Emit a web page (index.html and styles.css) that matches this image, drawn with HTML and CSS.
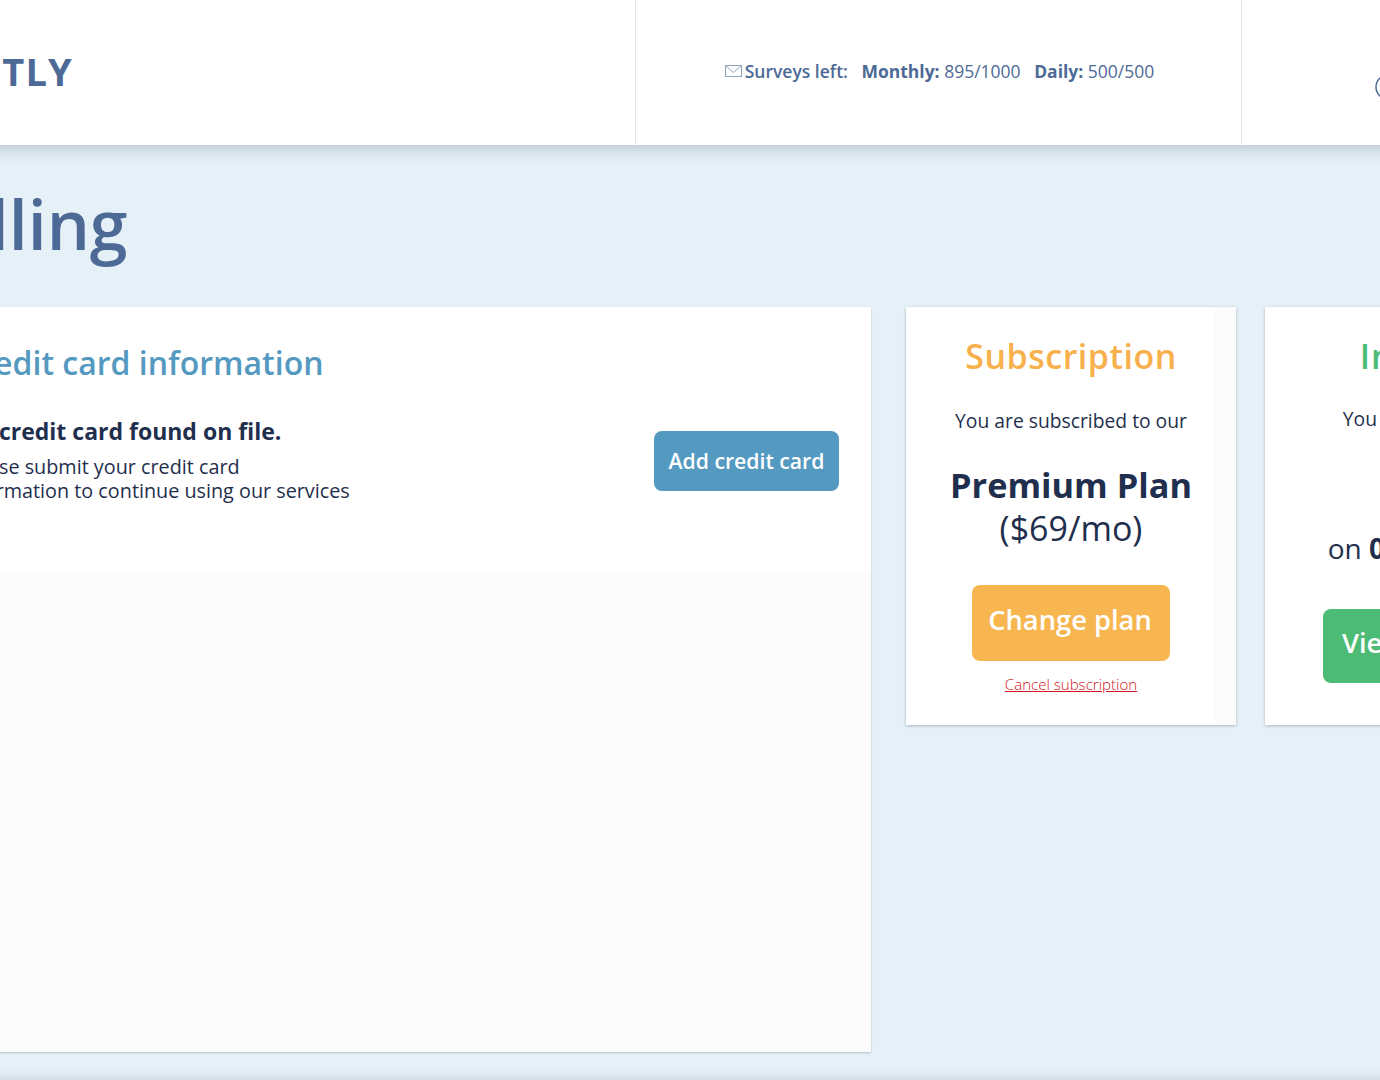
FILE: index.html
```html
<!DOCTYPE html>
<html lang="en">
<head>
  <meta charset="UTF-8" />
  <title>Billing</title>
  <link rel="stylesheet" href="styles.css">
</head>
<body>
<div class="page">
  <header class="top-bar">
    <div class="logo-block"><span class="logo">QUESTLY</span></div>
    <div class="surveys-block">
      <svg class="mail-icon" width="17" height="12" viewBox="0 0 17 12" fill="none" stroke="#8fa3bd" stroke-width="1">
        <rect x="0.5" y="0.5" width="16" height="11"/>
        <path d="M0.5 0.5 L8.5 7.5 L16.5 0.5"/>
      </svg>
      <span class="surveys-label">Surveys left:</span>
      <span class="surveys-count"><b>Monthly:</b> 895/1000</span>
      <span class="surveys-count"><b>Daily:</b> 500/500</span>
    </div>
    <div class="user-block">
      <svg width="28" height="28" viewBox="0 0 28 28" fill="none" stroke="#4d6a97" stroke-width="1.5">
        <circle cx="14" cy="14" r="12"/>
      </svg>
    </div>
  </header>

  <h1 class="page-title">Billing</h1>

  <main class="cards">
    <section class="card-main">
      <div class="card-info">
        <h2 class="info-title">Credit card information</h2>
        <div class="info-row">
          <div>
            <h3 class="info-heading">No credit card found on file.</h3>
            <p class="info-text">Please submit your credit card<br>information to continue using our services</p>
          </div>
          <button class="btn btn-blue">Add credit card</button>
        </div>
      </div>
      <div class="card-rest"></div>
    </section>

    <div class="side-cards">
      <section class="side-card">
        <h2 class="side-title orange">Subscription</h2>
        <p class="side-text">You are subscribed to our</p>
        <div class="plan-name">Premium Plan</div>
        <div class="plan-price">($69/mo)</div>
        <button class="btn btn-big btn-orange">Change plan</button>
        <a class="cancel-link" href="#">Cancel subscription</a>
      </section>

      <section class="side-card">
        <h2 class="side-title green">Invoices</h2>
        <p class="side-text invoice-text">You were last billed</p>
        <div class="plan-name invoice-amount">$69.00</div>
        <div class="invoice-date">on <b>01/15/2020</b></div>
        <button class="btn btn-big btn-green">View invoices</button>
      </section>
    </div>
  </main>
  <footer class="bottom-bar"></footer>
</div>
</body>
</html>
```

FILE: styles.css
```css
html, body {
  margin: 0;
  height: 1080px;
  overflow: hidden;
}

body {
  background: #e6f1f7;
  font-family: "Open Sans", "Liberation Sans", sans-serif;
  color: #1f2f4d;
}

/* the screenshot is scrolled sideways, so the page starts left of the window */
.page {
  width: 1800px;
  margin-left: -72px;
}

.top-bar {
  display: flex;
  height: 145px;
  background: #fff;
  box-shadow: 0 2px 18px rgba(70, 100, 120, 0.35);
  position: relative;
}

.logo-block {
  width: 144px;
  padding-right: 563px;
  padding-bottom: 3px;
  border-right: 1px solid #e4e4e4;
  display: flex;
  align-items: center;
  justify-content: flex-end;
}

.logo {
  margin-right: -1px;
  font-size: 38px;
  font-weight: 700;
  letter-spacing: 1.2px;
  color: #4d6a97;
}

.surveys-block {
  width: 603px;
  padding: 0 0 4px 2px;
  border-right: 1px solid #e4e4e4;
  display: flex;
  align-items: center;
  justify-content: center;
  gap: 13.5px;
  font-size: 17.5px;
  color: #4d6a97;
}

.mail-icon {
  margin-right: -10.5px;
}

.surveys-label {
  font-weight: 600;
}

.surveys-count b {
  font-weight: 700;
}

.user-block {
  padding: 73px 0 0 132px;
}

.page-title {
  margin: 0 0 0 -2px;
  height: 162px;
  box-sizing: border-box;
  font-size: 68px;
  font-weight: 600;
  line-height: 158px;
  color: #4d6a97;
}

.cards {
  display: flex;
  align-items: flex-start;
  gap: 35px;
}

.card-main {
  width: 943px;
  height: 745px;
  display: flex;
  flex-direction: column;
  box-shadow: 0 1px 2px rgba(60, 80, 100, 0.3);
}

.card-info {
  height: 266px;
  padding: 32px;
  box-sizing: border-box;
  background: #fff;
}

.card-rest {
  flex: 1;
  background: #fbfbfb;
}

.info-title {
  margin: 0 0 29px;
  font-size: 32px;
  font-weight: 600;
  line-height: 48px;
  color: #5499c0;
}

.info-row {
  display: flex;
  align-items: center;
  justify-content: space-between;
}

.info-heading {
  margin: 0 0 9px;
  font-size: 23px;
  font-weight: 700;
  line-height: 30px;
}

.info-text {
  margin: 0;
  font-size: 19.8px;
  line-height: 24px;
}

.btn {
  border: none;
  border-radius: 8px;
  color: #fff;
  font-family: inherit;
  font-weight: 600;
  cursor: pointer;
}

.btn-blue {
  width: 185px;
  height: 60px;
  margin-top: 3px;
  padding: 0 0 2px;
  background: #5499c0;
  font-size: 21.2px;
}

.btn-big {
  height: 76px;
  padding: 0 2px 7px 0;
  font-size: 27.3px;
}

.btn-orange {
  width: 198px;
  margin-top: 35px;
  background: #f7b64f;
}

.btn-green {
  width: 214px;
  height: 74px;
  margin-top: 41px;
  padding-right: 0;
  background: #4cbb75;
}

.side-cards {
  display: flex;
  gap: 29px;
}

.side-card {
  width: 330px;
  height: 418px;
  padding-top: 24px;
  box-sizing: border-box;
  display: flex;
  flex-direction: column;
  align-items: center;
  background: linear-gradient(to right, #fff 309px, #fbfbfb 309px);
  box-shadow: 0 1px 3px rgba(60, 80, 100, 0.35);
  text-align: center;
}

.side-title {
  margin: 0 0 2px;
  font-size: 34px;
  font-weight: 600;
  letter-spacing: 0.5px;
  line-height: 50px;
}

.orange { color: #f7b04c; }
.green { color: #4cbb75; letter-spacing: 0.9px; }

.side-text {
  margin: 24px 0 0;
  font-size: 19.3px;
  line-height: 28px;
}

.invoice-text {
  margin-top: 22px;
}

.plan-name {
  margin-top: 28px;
  font-size: 34.3px;
  font-weight: 700;
  line-height: 44px;
}

.plan-price {
  font-size: 34px;
  line-height: 43px;
}

.invoice-amount {
  margin-top: 35px;
  font-size: 32.3px;
}

.invoice-date {
  margin-top: 16px;
  padding-right: 12px;
  font-size: 28px;
  line-height: 40px;
}

.cancel-link {
  margin-top: 11px;
  font-size: 15.05px;
  font-weight: 300;
  line-height: 24px;
  color: #d01622;
}

.bottom-bar {
  height: 60px;
  margin-top: 28px;
  background: #e6f1f7;
  box-shadow: 0 -2px 12px rgba(70, 100, 120, 0.2);
}
```
